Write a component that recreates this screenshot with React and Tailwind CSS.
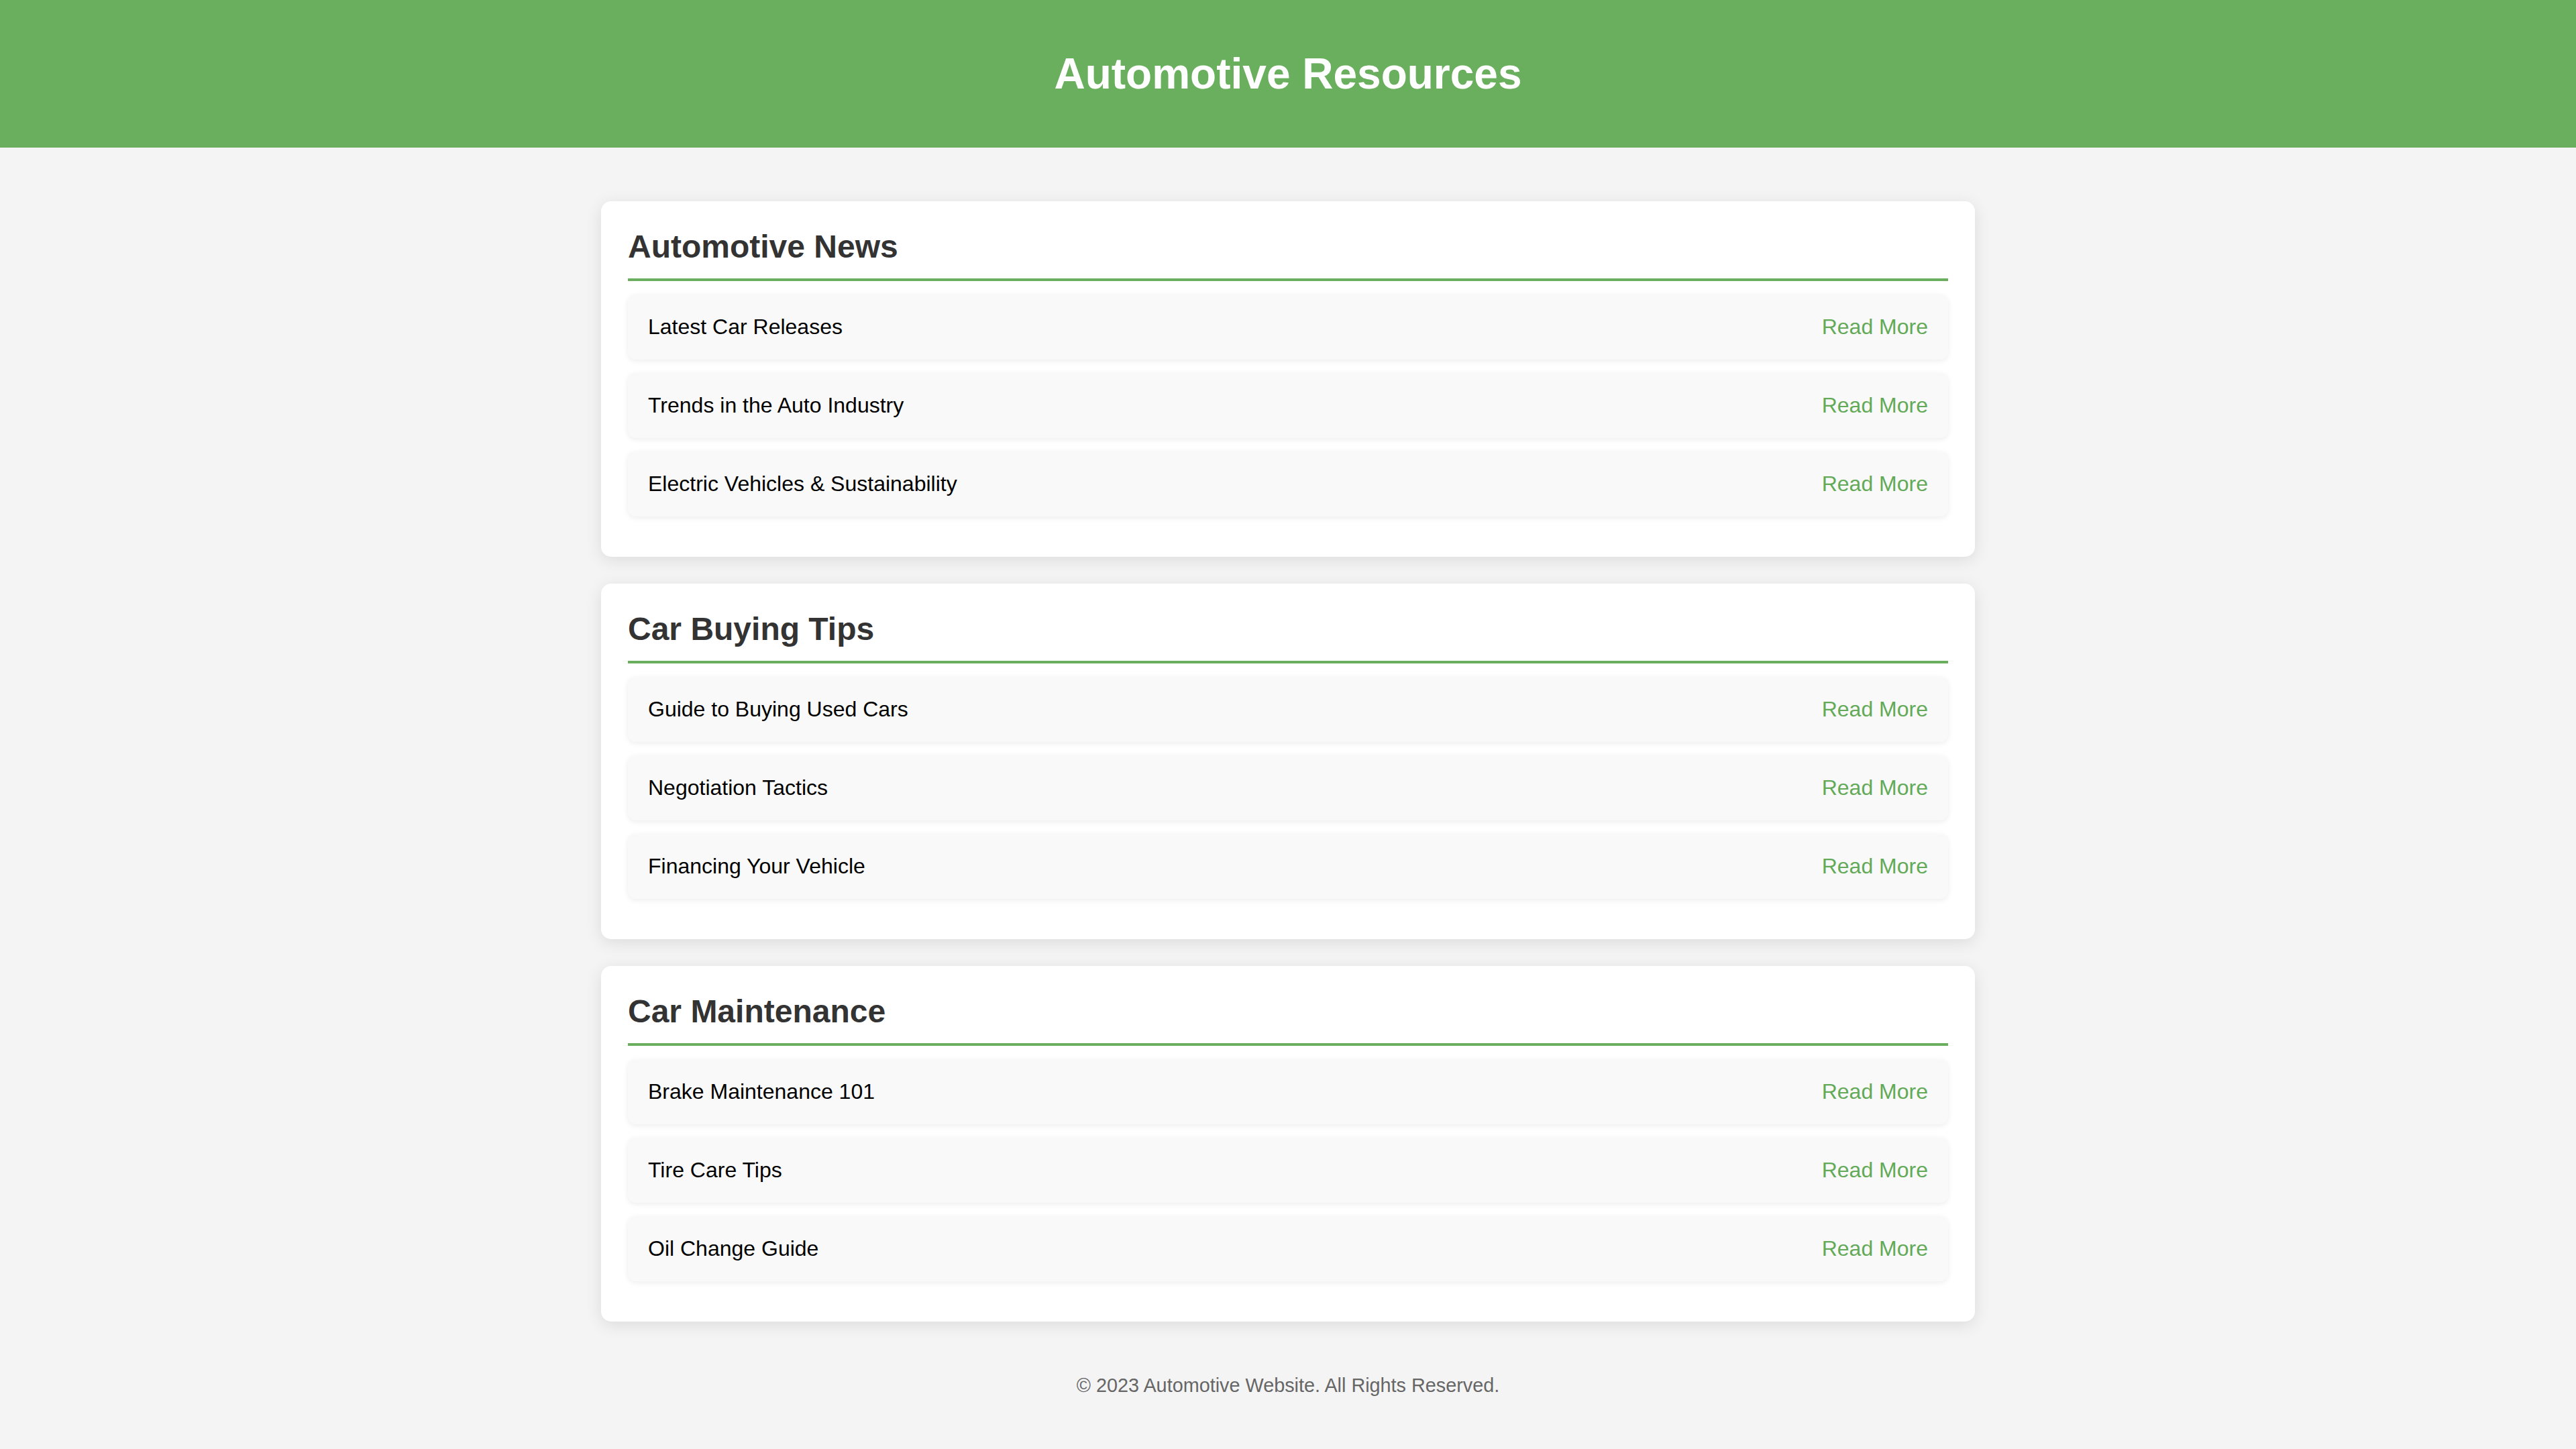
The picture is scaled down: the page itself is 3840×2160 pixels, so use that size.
import React from "react";

const sections = [
  {
    title: "Automotive News",
    items: [
      "Latest Car Releases",
      "Trends in the Auto Industry",
      "Electric Vehicles & Sustainability",
    ],
  },
  {
    title: "Car Buying Tips",
    items: ["Guide to Buying Used Cars", "Negotiation Tactics", "Financing Your Vehicle"],
  },
  {
    title: "Car Maintenance",
    items: ["Brake Maintenance 101", "Tire Care Tips", "Oil Change Guide"],
  },
];

function Section({ title, items }) {
  return (
    <section className="bg-white rounded-[15px] px-[40px] pt-[40px] pb-[40px] shadow-[0_5px_25px_rgba(0,0,0,0.1)]">
      <h2 className="text-[48px] leading-[55px] font-bold text-[#333] pb-[20px] border-b-4 border-[#6aaf5e] mb-[20px]">
        {title}
      </h2>
      <ul>
        {items.map((item, i) => (
          <li
            key={i}
            className="flex justify-between items-center bg-[#f9f9f9] rounded-[12px] px-[30px] py-[30px] mb-[20px] text-[32px] leading-[37px] shadow-[0_2px_8px_rgba(0,0,0,0.08)]"
          >
            <span className="text-black">{item}</span>
            <a href="#" className="text-[#62aa57]">
              Read More
            </a>
          </li>
        ))}
      </ul>
    </section>
  );
}

export default function App() {
  return (
    <div className="min-h-screen bg-[#f4f4f4] font-['Liberation_Sans',Arial,sans-serif]">
      {/* Header */}
      <header className="h-[220px] bg-[#6aaf5e] flex items-center justify-center">
        <h1 className="text-[64px] leading-[74px] font-bold text-white">Automotive Resources</h1>
      </header>

      {/* Sections */}
      <main className="w-[2048px] mx-auto pt-[80px] flex flex-col gap-[40px]">
        {sections.map((s) => (
          <Section key={s.title} title={s.title} items={s.items} />
        ))}
      </main>

      {/* Footer */}
      <footer className="pt-[79px] pb-[79px] text-center text-[28.8px] leading-[32px] text-[#666]">
        © 2023 Automotive Website. All Rights Reserved.
      </footer>
    </div>
  );
}
